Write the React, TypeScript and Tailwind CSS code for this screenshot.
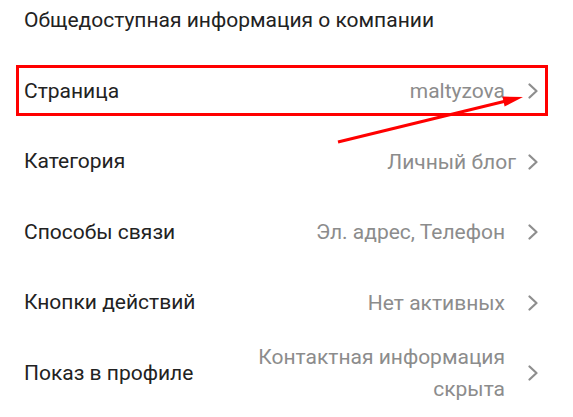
import React from 'react';

type Row = {
  label: string;
  value: string[];
  gap?: string;
};

const rows: Row[] = [
  { label: 'Страница', value: ['maltyzova'] },
  { label: 'Категория', value: ['Личный блог'], gap: 'mr-[11px]' },
  { label: 'Способы связи', value: ['Эл. адрес, Телефон'] },
  { label: 'Кнопки действий', value: ['Нет активных'] },
  { label: 'Показ в профиле', value: ['Контактная информация', 'скрыта'] },
];

function Chevron() {
  return (
    <svg width="12" height="16" viewBox="0 0 12 16" className="shrink-0">
      <path d="M2.5 1.5 L9.5 8 L2.5 14.5" fill="none" stroke="#8e8e8e" strokeWidth="2.2" strokeLinecap="round" strokeLinejoin="round" />
    </svg>
  );
}

export default function App() {
  return (
    <div
      className="relative w-[573px] h-[417px] bg-white overflow-hidden"
      style={{ fontFamily: 'Roboto, "Noto Sans", sans-serif' }}
    >
      <div className="h-[42px] flex items-center pl-6 text-[21px] text-[#222222]">
        Общедоступная информация о компании
      </div>
      <div className="mt-[14px] flex flex-col">
        {rows.map((row, i) => (
          <div key={row.label} className="relative h-[70.5px] flex items-center pl-6 pr-[34px]">
            <span className="flex-1 text-[21px] text-[#222222]">{row.label}</span>
            <div className={`text-right text-[21px] leading-[32px] text-[#8c8c8c] ${row.gap ?? 'mr-[22px]'}`}>
              {row.value.map((v) => (
                <div key={v}>{v}</div>
              ))}
            </div>
            <Chevron />
            {i === 0 && (
              <div className="absolute left-4 right-[25px] top-[9px] h-[51px] border-[3px] border-[#ff0000]" />
            )}
          </div>
        ))}
      </div>
      <svg className="absolute inset-0 pointer-events-none" width="573" height="417">
        <line x1="338" y1="142" x2="506" y2="101" stroke="#ff0000" strokeWidth="3" />
        <polygon points="523,97 504.6,106.4 502.4,96.6" fill="#ff0000" />
      </svg>
    </div>
  );
}
